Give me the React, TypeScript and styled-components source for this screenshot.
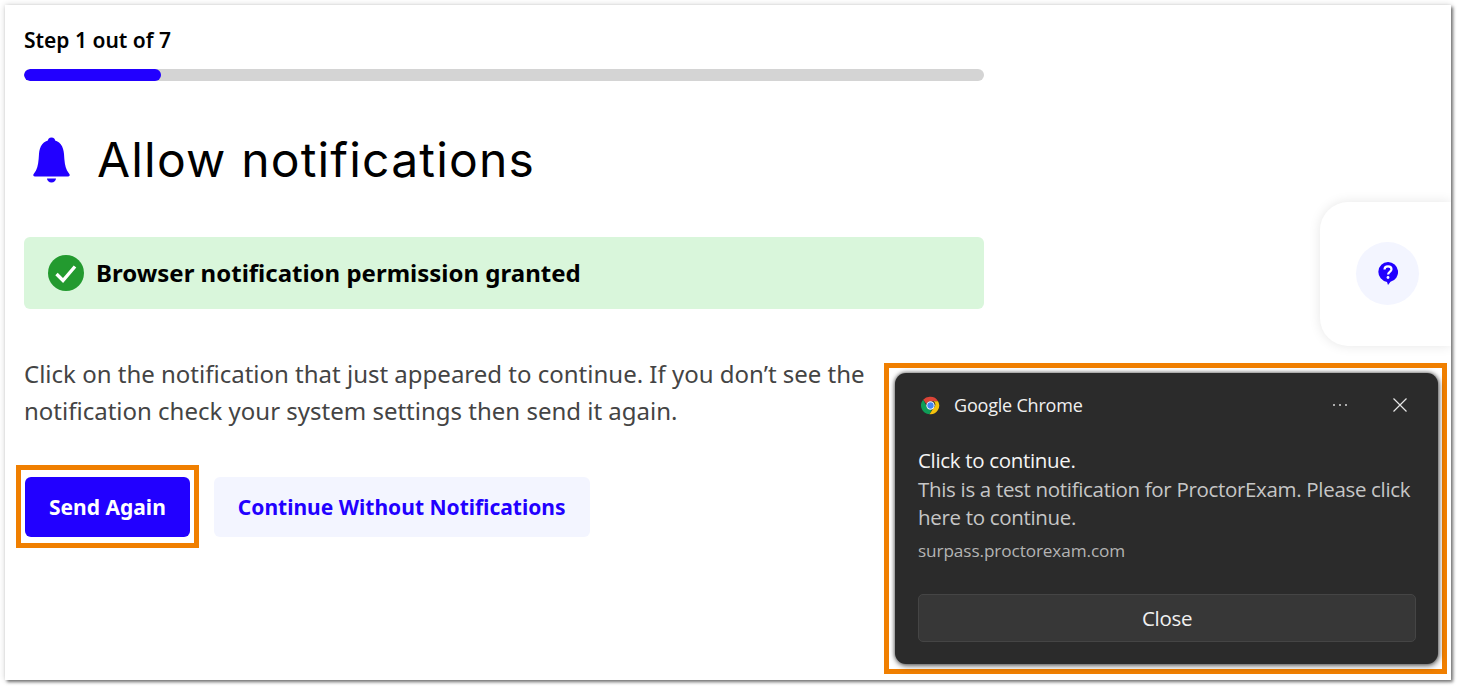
import styled, { createGlobalStyle } from "styled-components";

const GlobalStyle = createGlobalStyle`
  html, body {
    margin: 0;
    padding: 0;
    background: #fff;
    font-family: "Noto Sans", "Open Sans", sans-serif;
  }
  * {
    box-sizing: border-box;
  }
`;

const BLUE = "#2200ff";
const ORANGE = "#f07f00";

const Page = styled.div`
  width: 1460px;
  height: 688px;
  padding: 5px 9px 8px 5px;
  overflow: hidden;
`;

const Frame = styled.div`
  position: relative;
  width: 1446px;
  height: 675px;
  padding: 23px 0 0 19px;
  background: #fff;
  overflow: hidden;
  box-shadow: 2px 2px 3px rgba(0, 0, 0, 0.5), 0 0 6px rgba(0, 0, 0, 0.18);
`;

const Column = styled.main`
  display: flex;
  flex-direction: column;
  width: 960px;
`;

const StepLabel = styled.div`
  font-size: 21px;
  font-weight: 600;
  line-height: 24px;
  color: #000;
`;

const ProgressTrack = styled.div`
  height: 12px;
  margin-top: 17px;
  border-radius: 6px;
  background: #d4d4d4;
  overflow: hidden;
`;

const ProgressFill = styled.div`
  height: 100%;
  border-radius: 6px;
  background: ${BLUE};
`;

const Heading = styled.h1`
  display: flex;
  align-items: center;
  gap: 27px;
  height: 60px;
  margin: 49px 0 0;
  padding-left: 9px;
  font-family: "Inter", "Lato", sans-serif;
  font-size: 48px;
  font-weight: 400;
  letter-spacing: 1.18px;
  line-height: 60px;
  color: #000;
`;

const Banner = styled.div`
  display: flex;
  align-items: center;
  gap: 12px;
  height: 72px;
  margin-top: 47px;
  padding: 0 24px;
  border-radius: 6px;
  background: #d9f6db;
  font-size: 24px;
  font-weight: 700;
  color: #000;
`;

const BannerText = styled.span`
  padding-bottom: 2px;
`;

const Message = styled.p`
  width: 860px;
  margin: 47px 0 0;
  font-size: 24px;
  line-height: 36.5px;
  color: #444;
`;

const Actions = styled.div`
  display: flex;
  align-items: center;
  margin: 36px 0 0 -8px;
`;

const Highlight = styled.div`
  padding: 7px 4px 6px;
  border: 5px solid ${ORANGE};
`;

const Button = styled.button<{ $primary?: boolean }>`
  height: 60px;
  padding: 0 24px;
  border: 0;
  border-radius: 6px;
  background: ${(p) => (p.$primary ? BLUE : "#f3f5ff")};
  color: ${(p) => (p.$primary ? "#fff" : BLUE)};
  font-family: inherit;
  font-size: 21px;
  font-weight: 700;
  white-space: nowrap;
`;

const SecondaryButton = styled(Button)`
  margin-left: 15px;
`;

const HelpTab = styled.aside`
  position: absolute;
  top: 197px;
  right: 0;
  display: flex;
  align-items: center;
  width: 131px;
  height: 144px;
  padding: 0 0 1px 36px;
  border-radius: 28px 0 0 28px;
  background: #fff;
  box-shadow: 0 0 12px rgba(0, 0, 0, 0.1);
`;

const HelpCircle = styled.div`
  display: flex;
  align-items: center;
  justify-content: center;
  width: 63px;
  height: 63px;
  border-radius: 50%;
  background: #f3f5ff;
`;

const ToastHighlight = styled.div`
  position: absolute;
  top: 358px;
  left: 879px;
  width: 563px;
  height: 311px;
  padding: 5px 4px 5px 6px;
  border: 5px solid ${ORANGE};
`;

const Toast = styled.div`
  display: flex;
  flex-direction: column;
  height: 100%;
  padding: 0 23px;
  border-radius: 11px;
  background: #2b2b2b;
  box-shadow: 0 0 4px rgba(0, 0, 0, 0.6), 1px 2px 6px rgba(0, 0, 0, 0.45);
  font-family: "Open Sans", "Noto Sans", sans-serif;
  color: #fff;
`;

const ToastHeader = styled.header`
  display: flex;
  align-items: center;
  height: 32px;
  margin-top: 16px;
  padding-left: 3px;
  font-size: 18px;
  letter-spacing: -0.2px;
  color: #f0f0f0;
`;

const AppName = styled.span`
  flex: 1;
  margin-left: 14px;
`;

const ToastMore = styled.span`
  display: flex;
  gap: 4px;
  margin-right: 46px;
`;

const Dot = styled.i`
  width: 2px;
  height: 2px;
  border-radius: 50%;
  background: #d8d8d8;
`;

const ToastClose = styled.span`
  display: flex;
  margin-right: 8px;
`;

const ToastBody = styled.div`
  margin-top: 25px;
  font-size: 20.5px;
  line-height: 28.5px;
  letter-spacing: -0.32px;
  color: #c6c6c6;
`;

const ToastTitle = styled.div`
  color: #f4f4f4;
`;

const ToastSource = styled.div`
  margin-top: 7.5px;
  font-size: 17.2px;
  line-height: 24px;
  letter-spacing: -0.1px;
  color: #b4b4b4;
`;

const ToastButton = styled.button`
  width: 498px;
  height: 48px;
  margin-top: 31px;
  border: 1px solid #454545;
  border-radius: 5px;
  background: #373737;
  color: #f0f0f0;
  font-family: inherit;
  font-size: 20.5px;
  letter-spacing: -0.3px;
`;

const BellIcon = () => (
  <svg width="37" height="46" viewBox="0 0 37 46" fill={BLUE}>
    <circle cx="18.500" cy="4" r="3.600" />
    <path d="M18.500 3C10 3 6.500 9.500 6 17c-.4 7-1 12.500-3 16.500L.5 37.200c-.6 1 0 2.300 1.300 2.300h33.400c1.300 0 1.900-1.300 1.300-2.300L34 33.500c-2-4-2.600-9.500-3-16.500C30.500 9.500 27 3 18.500 3z" />
    <path d="M14 41.500h9c0 2.300-2 4-4.500 4s-4.500-1.700-4.500-4z" />
  </svg>
);

const CheckIcon = () => (
  <svg width="36" height="36" viewBox="0 0 36 36">
    <circle cx="18" cy="18" r="18" fill="#239a2f" />
    <path d="M8.500 19l6.500 6.500L27 11.500" fill="none" stroke="#fff" strokeWidth="3.400" />
  </svg>
);

const HelpIcon = () => (
  <svg width="20" height="23" viewBox="0 0 20 23">
    <path d="M10 0a10 10 0 0 1 2.500 19.700L10 23l-1-3.100A10 10 0 0 1 10 0z" fill={BLUE} />
    <path
      d="M6.500 7.600C6.500 5.600 8 4.300 10 4.300s3.500 1.200 3.500 3c0 2.600-3.400 2.600-3.400 5.200"
      fill="none"
      stroke="#fff"
      strokeWidth="2.200"
    />
    <circle cx="10" cy="15.500" r="1.400" fill="#fff" />
  </svg>
);

const ChromeLogo = () => (
  <svg width="19" height="19" viewBox="0 0 48 48">
    <path d="M24 2a22 22 0 0 1 19 11H24a11 11 0 0 0-10.500 7.500L5.500 9.500A22 22 0 0 1 24 2z" fill="#db4437" />
    <path d="M5.500 9.500l9.500 17A11 11 0 0 0 27 34.600L21.500 45.900A22 22 0 0 1 5.500 9.500z" fill="#0f9d58" />
    <path d="M43 13A22 22 0 0 1 21.500 45.900l9.800-15A11 11 0 0 0 32 13z" fill="#f4c20d" />
    <circle cx="24" cy="24" r="10.500" fill="#fff" />
    <circle cx="24" cy="24" r="8" fill="#4285f4" />
  </svg>
);

const CloseGlyph = () => (
  <svg width="14" height="14" viewBox="0 0 14 14" stroke="#e6e6e6" strokeWidth="1.200">
    <path d="M.5.5l13 13M13.500.5l-13 13" />
  </svg>
);

const App = () => {
  const step = 1;
  const total = 7;

  return (
    <Page>
      <GlobalStyle />
      <Frame>
        <Column>
          <StepLabel>
            Step {step} out of {total}
          </StepLabel>
          <ProgressTrack>
            <ProgressFill style={{ width: `${(step / total) * 100}%` }} />
          </ProgressTrack>
          <Heading>
            <BellIcon />
            Allow notifications
          </Heading>
          <Banner>
            <CheckIcon />
            <BannerText>Browser notification permission granted</BannerText>
          </Banner>
          <Message>
            Click on the notification that just appeared to continue. If you don’t see the
            notification check your system settings then send it again.
          </Message>
          <Actions>
            <Highlight>
              <Button $primary>Send Again</Button>
            </Highlight>
            <SecondaryButton>Continue Without Notifications</SecondaryButton>
          </Actions>
        </Column>

        <HelpTab>
          <HelpCircle>
            <HelpIcon />
          </HelpCircle>
        </HelpTab>

        <ToastHighlight>
          <Toast>
            <ToastHeader>
              <ChromeLogo />
              <AppName>Google Chrome</AppName>
              <ToastMore>
                <Dot />
                <Dot />
                <Dot />
              </ToastMore>
              <ToastClose>
                <CloseGlyph />
              </ToastClose>
            </ToastHeader>
            <ToastBody>
              <ToastTitle>Click to continue.</ToastTitle>
              This is a test notification for ProctorExam. Please click here to continue.
              <ToastSource>surpass.proctorexam.com</ToastSource>
            </ToastBody>
            <ToastButton>Close</ToastButton>
          </Toast>
        </ToastHighlight>
      </Frame>
    </Page>
  );
};

export default App;
